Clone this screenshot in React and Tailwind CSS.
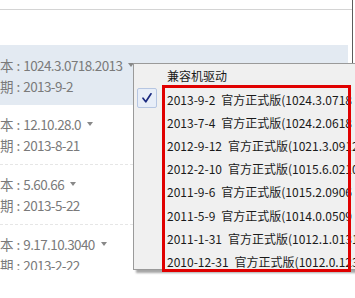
const rows = [
  { ver: "1024.3.0718.2013", date: "2013-9-2", active: true },
  { ver: "12.10.28.0", date: "2013-8-21" },
  { ver: "5.60.66", date: "2013-5-22" },
  { ver: "9.17.10.3040", date: "2013-2-22" },
];

const items = [
  ["2013-9-2", "官方正式版(1024.3.0718"],
  ["2013-7-4", "官方正式版(1024.2.0618"],
  ["2012-9-12", "官方正式版(1021.3.0912"],
  ["2012-2-10", "官方正式版(1015.6.0210"],
  ["2011-9-6", "官方正式版(1015.2.0906"],
  ["2011-5-9", "官方正式版(1014.0.0509"],
  ["2011-1-31", "官方正式版(1012.1.0131"],
  ["2010-12-31", "官方正式版(1012.0.1231"],
];

const Caret = () => (
  <span className="ml-[6px] inline-block w-0 h-0 border-l-[3px] border-r-[3px] border-t-[4px] border-l-transparent border-r-transparent border-t-[#888] translate-y-[-1px]" />
);

export default function App() {
  return (
    <div className="relative w-[355px] h-[298px] overflow-hidden bg-white font-['Noto_Sans_CJK_SC','Noto_Sans',sans-serif]">
      {/* driver list */}
      <div className="w-[353px] h-[270px] border-r border-[#5c5c5c] overflow-hidden flex flex-col">
        <div className="h-[10px] border-b border-[#d4d4d4] shrink-0" />
        <div className="h-[35px] shrink-0" />
        {rows.map((r) => (
          <div
            key={r.ver}
            className={
              r.active
                ? "h-[60px] shrink-0 w-[348px] bg-[#e3eaf2] pt-[10px]"
                : "h-[60px] shrink-0 w-[348px] border-b border-dashed border-[#e6e6e6] pt-[9px]"
            }
          >
            <div className="h-[21px] flex items-center text-[13.5px] text-[#7a7a7a] leading-none">
              <span>本</span>
              <span className="mx-[3px]">:</span>
              <span className="tracking-[-0.6px]">{r.ver}</span>
              <Caret />
            </div>
            <div className="h-[22px] flex items-center text-[13.5px] text-[#7a7a7a] leading-none">
              <span>期</span>
              <span className="mx-[3px]">:</span>
              <span className="tracking-[-0.6px]">{r.date}</span>
            </div>
          </div>
        ))}
      </div>

      {/* context menu */}
      <div className="absolute left-[133px] top-[63px] w-[240px] h-[207px] bg-[#f0f0f0] border border-[#9a9a9a] shadow-[3px_3px_2px_rgba(0,0,0,0.35)]">
        <div className="h-[24px] flex items-center pl-[33px] text-[12px] text-[#1a1a1a]">兼容机驱动</div>
        {items.map(([d, t], i) => (
          <div key={d} className="h-[23.2px] flex items-center text-[12px] text-[#1a1a1a] whitespace-nowrap">
            <div className="w-[33px] h-full flex items-center pl-[3px] shrink-0">
              {i === 0 && (
                <div className="w-[20px] h-[20px] mt-[-4px] bg-[#e8eef8] border border-[#b6c6e2] rounded-[2px] flex items-center justify-center">
                  <svg width="12" height="12" viewBox="0 0 12 12" fill="none">
                    <path d="M2 6.2 L4.8 9.8 L10 1.8" stroke="#1b2a80" strokeWidth="1.7" strokeLinecap="round" strokeLinejoin="round" />
                  </svg>
                </div>
              )}
            </div>
            <span>{d}</span>
            <span className="ml-[6px]">{t}</span>
          </div>
        ))}
      </div>

      {/* red annotation box */}
      <div className="absolute left-[162px] top-[85px] w-[189px] h-[187px] border-[3px] border-[#e00000]" />
    </div>
  );
}
